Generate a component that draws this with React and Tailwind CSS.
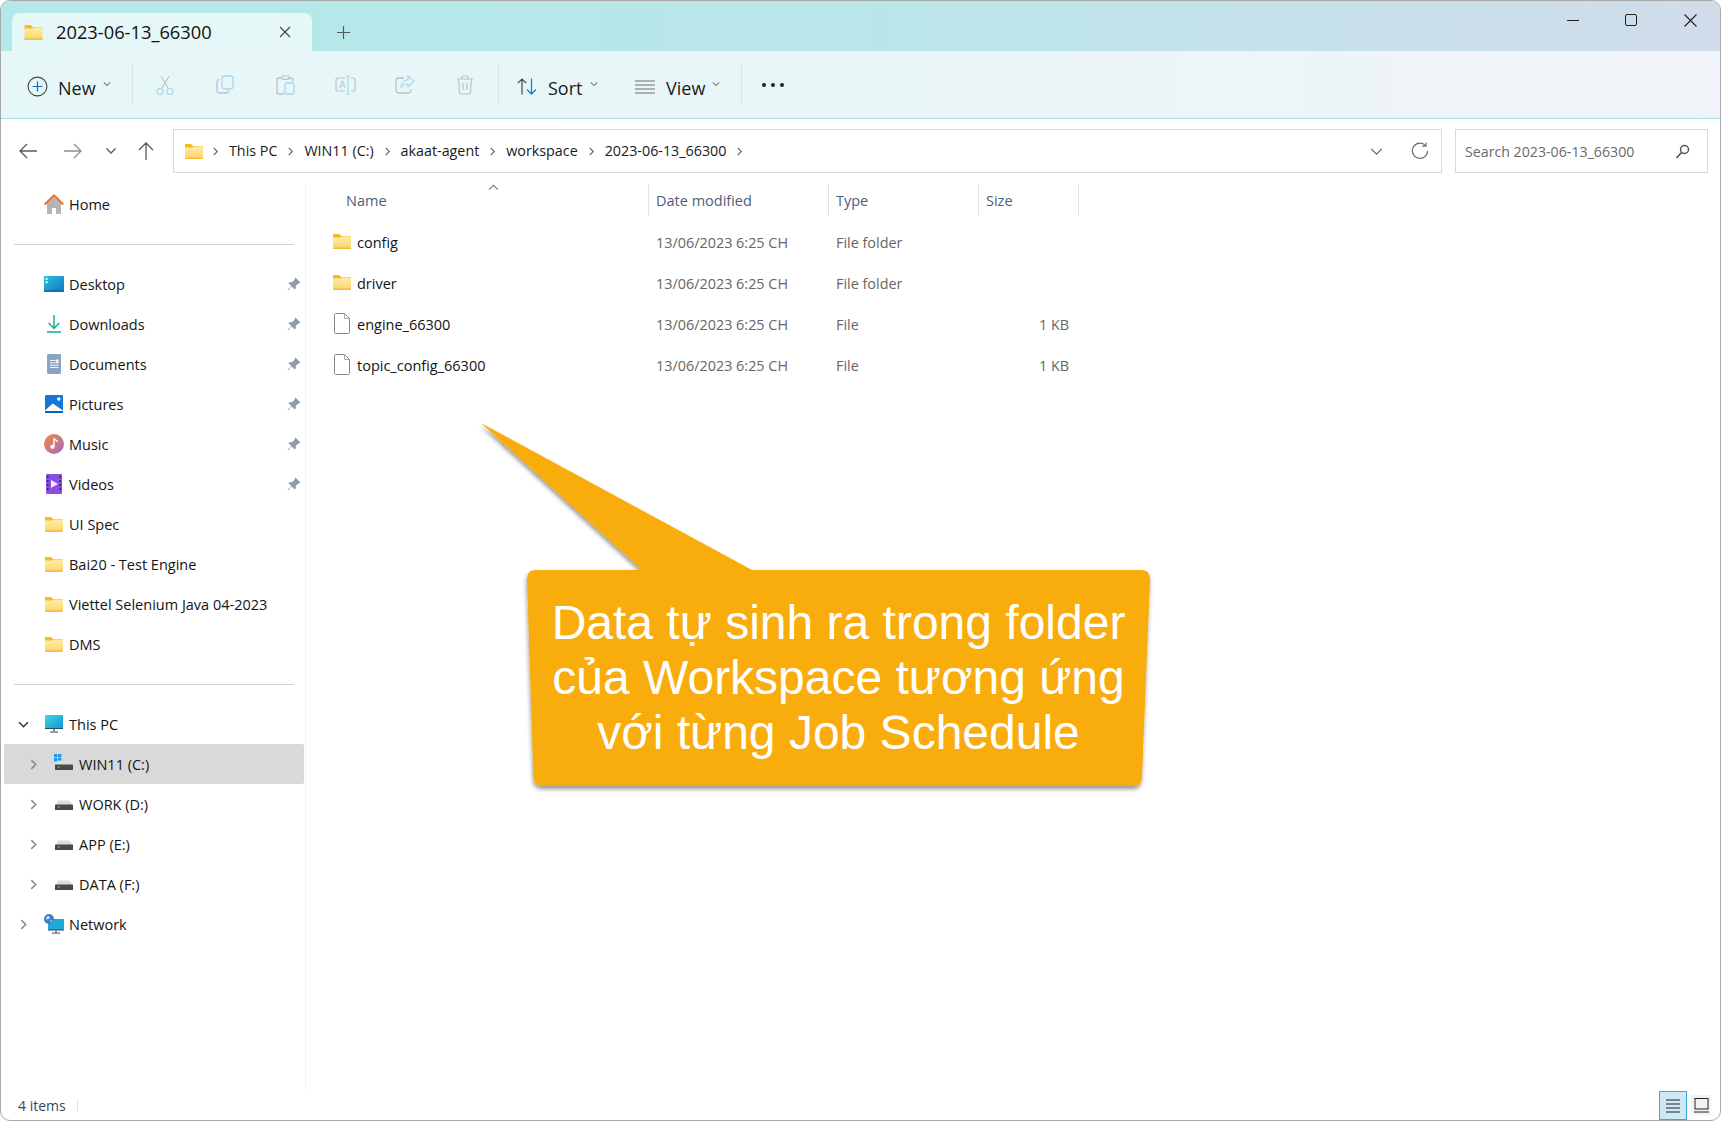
import React from "react";

const Folder = ({ w = 18, h = 15 }) => (
  <svg width={w} height={h} viewBox="0 0 18 15" className="shrink-0">
    <defs>
      <linearGradient id="fg" x1="0" y1="0" x2="0" y2="1">
        <stop offset="0" stopColor="#ffeeb0" />
        <stop offset="1" stopColor="#fdd35e" />
      </linearGradient>
    </defs>
    <path d="M0 1a1 1 0 0 1 1-1h5l2 2h9a1 1 0 0 1 1 1v2H0z" fill="#f9b81e" />
    <path d="M0 3.5h7.5L9 2.5h8a1 1 0 0 1 1 1V14a1 1 0 0 1-1 1H1a1 1 0 0 1-1-1z" fill="url(#fg)" />
    <path d="M0 14.2h18" stroke="#efb22c" strokeWidth="1" />
  </svg>
);

const FileIcon = () => (
  <svg width="18" height="21" viewBox="0 0 18 21" className="shrink-0">
    <path d="M2.5.5h9l5 5v14a1 1 0 0 1-1 1h-13a1 1 0 0 1-1-1v-18a1 1 0 0 1 1-1z" fill="#fff" stroke="#8a8a8a" />
    <path d="M11.5.5v5h5" fill="none" stroke="#a8a8a8" />
  </svg>
);

const Chev = ({ dir = "right", c = "#7a7a7a", s = 10, sw = 1.3 }) => {
  const d = {
    right: "M3 1l4 4-4 4",
    down: "M1 3l4 4 4-4",
    up: "M1 7l4-4 4 4",
  }[dir];
  return (
    <svg width={s} height={s} viewBox="0 0 10 10" className="shrink-0">
      <path d={d} fill="none" stroke={c} strokeWidth={sw} />
    </svg>
  );
};

const Pin = () => (
  <svg width="14" height="14" viewBox="0 0 14 14" className="shrink-0">
    <path d="M8.5.6l4.9 4.9-1 .9-.8-.2-2.8 2.8.1 2.2-1.2 1.2-2.9-2.9L1.2 13.4.6 12.8l3.9-3.6-2.9-2.9 1.2-1.2 2.2.1 2.8-2.8-.2-.8z" fill="#8f9ba6" />
  </svg>
);

const Drive = ({ win }) => (
  <div className="relative w-[20px] h-[20px] shrink-0">
    <svg width="20" height="20" viewBox="0 0 20 20">
      {win && (
        <g fill="#1e9bf0">
          <rect x="0" y="0" width="3.4" height="3.4" />
          <rect x="4" y="0" width="3.4" height="3.4" />
          <rect x="0" y="4" width="3.4" height="3.4" />
          <rect x="4" y="4" width="3.4" height="3.4" />
        </g>
      )}
      <path d="M2 10l2-3.4h11l3 3.4v1H2z" fill="#dcdcdc" />
      <rect x="1" y="10.5" width="18" height="5.5" rx=".6" fill="#4a4a4a" />
      <rect x="4" y="12.5" width="1.4" height="1.4" fill="#5fe04f" />
    </svg>
  </div>
);

const icons = {
  home: (
    <svg width="20" height="20" viewBox="0 0 20 20">
      <path d="M3 9.5L10 3l7 6.5V20H12v-6H8v6H3z" fill="#b4b4b4" />
      <path d="M0.7 10.5L10 1.5l9.3 9" fill="none" stroke="#e8742a" strokeWidth="2.2" />
    </svg>
  ),
  desktop: (
    <svg width="20" height="16" viewBox="0 0 20 16">
      <defs>
        <linearGradient id="dg" x1="0" y1="0" x2="1" y2="1">
          <stop offset="0" stopColor="#29c0dc" />
          <stop offset="1" stopColor="#1479c4" />
        </linearGradient>
      </defs>
      <rect width="20" height="15" rx=".8" fill="url(#dg)" />
      <rect y="14.6" width="20" height="1.2" fill="#0c3f68" />
      <rect x="1.6" y="1.8" width="2" height="2" fill="#dff6fb" />
      <rect x="1.6" y="5.2" width="2" height="2" fill="#dff6fb" />
    </svg>
  ),
  downloads: (
    <svg width="20" height="20" viewBox="0 0 20 20">
      <path d="M10 1v13M4.6 9l5.4 5.4L15.4 9" fill="none" stroke="#1fae8f" strokeWidth="1.5" />
      <path d="M3 18h14" stroke="#1fb394" strokeWidth="1.6" />
    </svg>
  ),
  documents: (
    <svg width="20" height="20" viewBox="0 0 20 20">
      <rect x="3" y="0" width="14" height="20" rx="1.2" fill="#8ba3c2" />
      <rect x="6" y="6" width="5" height="1" fill="#eef2f7" />
      <rect x="6" y="8.4" width="5" height="1" fill="#eef2f7" />
      <rect x="11.6" y="5.5" width="3" height="3.8" fill="#eef2f7" />
      <rect x="6" y="10.8" width="8.5" height="1" fill="#eef2f7" />
      <rect x="6" y="13" width="8.5" height="1" fill="#eef2f7" />
    </svg>
  ),
  pictures: (
    <svg width="20" height="18" viewBox="0 0 20 18">
      <rect x="1" y="0" width="18" height="18" rx="1" fill="#1677d8" />
      <circle cx="14.8" cy="4" r="1.7" fill="#fff" />
      <path d="M1 15.6L8.8 8.6 19 15.6V16H1z" fill="#fff" />
      <rect x="1" y="16" width="18" height="2" fill="#0f5fb8" />
    </svg>
  ),
  music: (
    <svg width="20" height="20" viewBox="0 0 20 20">
      <defs>
        <linearGradient id="mg" x1="0" y1="0" x2="1" y2="1">
          <stop offset="0" stopColor="#f08a3c" />
          <stop offset="1" stopColor="#a869c8" />
        </linearGradient>
      </defs>
      <circle cx="10" cy="10" r="10" fill="url(#mg)" />
      <path d="M10 4.5v8" stroke="#fff" strokeWidth="1.4" />
      <path d="M10 4.5c1 1.8 3 1.6 3.6 3.4" fill="none" stroke="#fff" strokeWidth="1.4" />
      <circle cx="8.4" cy="12.8" r="2.1" fill="#fff" />
    </svg>
  ),
  videos: (
    <svg width="20" height="20" viewBox="0 0 20 20">
      <rect x="2" y="0" width="16" height="20" rx="1" fill="#8a4fe0" />
      <g fill="#3c1d78">
        <rect x="3" y="2" width="1.5" height="2" />
        <rect x="3" y="6" width="1.5" height="2" />
        <rect x="3" y="10" width="1.5" height="2" />
        <rect x="3" y="14" width="1.5" height="2" />
        <rect x="15.5" y="2" width="1.5" height="2" />
        <rect x="15.5" y="6" width="1.5" height="2" />
        <rect x="15.5" y="10" width="1.5" height="2" />
        <rect x="15.5" y="14" width="1.5" height="2" />
      </g>
      <path d="M7 6l7 4-7 4z" fill="#f3edff" />
    </svg>
  ),
  pc: (
    <svg width="20" height="18" viewBox="0 0 20 18">
      <defs>
        <linearGradient id="pg" x1="0" y1="0" x2="1" y2="1">
          <stop offset="0" stopColor="#3bdbe0" />
          <stop offset="1" stopColor="#1692d8" />
        </linearGradient>
      </defs>
      <rect x="1" y="0" width="18" height="13.5" fill="url(#pg)" />
      <path d="M1 13.5h18" stroke="#25506e" strokeWidth="1" />
      <rect x="9" y="14" width="2" height="2.4" fill="#7a8691" />
      <rect x="6" y="16.4" width="8" height="1.3" fill="#5f6b76" />
    </svg>
  ),
  network: (
    <svg width="20" height="20" viewBox="0 0 20 20">
      <rect x="4" y="5" width="16" height="11" fill="#22a7dc" />
      <path d="M4 16h16" stroke="#25506e" strokeWidth="1" />
      <rect x="11" y="16.5" width="2" height="2" fill="#7a8691" />
      <rect x="8" y="18.5" width="8" height="1.2" fill="#5f6b76" />
      <circle cx="5" cy="5" r="5" fill="#3f7fc4" />
      <path d="M2 3.5c2-2 3.5-1.5 4 .2-.5 1.6-2.4 1-3.5 2.3zM6.5 6.5l2 0-1.5 2.2z" fill="#bfe0f4" />
    </svg>
  ),
};

const Row = ({ icon, label, pinned, chevron, depth = 0, active, down }) => (
  <div className={`mx-[3px] w-[300px] h-10 flex items-center rounded-[2px] shrink-0 ${active ? "bg-[#d9d9d9]" : ""}`}>
    <div className={`${depth ? "w-[50px] pl-[24px]" : "w-[40px] pl-[14px]"} shrink-0 flex items-center`}>
      {chevron && <Chev dir={down ? "down" : "right"} c={down ? "#333333" : "#8a8a8a"} sw={1.4} s={11} />}
    </div>
    <div className="w-[20px] shrink-0 flex items-center justify-center">{icon}</div>
    <span className="ml-[5px] pt-[2px] text-[14.5px] text-[#141414] whitespace-nowrap">{label}</span>
    {pinned && (
      <span className="ml-auto mr-[3px]">
        <Pin />
      </span>
    )}
  </div>
);

const SideDivider = () => (
  <div className="h-10 flex items-center shrink-0 pl-[13px]">
    <div className="w-[280px] h-px bg-[#d4d4d4]" />
  </div>
);

const TSep = () => <div className="w-px h-[40px] bg-[#d5e3e4] shrink-0" />;

const Cell = ({ children }) => <div className="w-[60px] h-[22px] flex items-center justify-center shrink-0">{children}</div>;

const G = "#bcc3c6";
const B = "#a9d5f2";

const crumbs = ["This PC", "WIN11 (C:)", "akaat-agent", "workspace", "2023-06-13_66300"];
const files = [
  { n: "config", t: "File folder", folder: true },
  { n: "driver", t: "File folder", folder: true },
  { n: "engine_66300", t: "File", s: "1 KB" },
  { n: "topic_config_66300", t: "File", s: "1 KB" },
];

export default function App() {
  return (
    <div className="relative w-[1721px] h-[1121px] bg-white overflow-hidden font-['Open_Sans','Noto_Sans',sans-serif]">
      <div className="w-[1721px] h-[1121px] border border-[#a8a8a8] rounded-[10px] overflow-hidden flex flex-col bg-white">
        {/* title bar */}
        <div className="h-[50px] shrink-0 flex items-end pl-[11px] bg-linear-to-r from-[#b4e9e9] via-[#b9e6ea] to-[#d1dcea]">
          <div className="w-[300px] h-[38px] rounded-t-[8px] bg-[#e6f7f7] flex items-center pl-[12px] pr-[21px]">
            <Folder w={19} h={15} />
            <span className="ml-[13px] text-[18.3px] text-[#111] whitespace-nowrap">2023-06-13_66300</span>
            <svg width="12" height="12" viewBox="0 0 12 12" className="ml-auto">
              <path d="M1 1l10 10M11 1L1 11" stroke="#444" strokeWidth="1.1" />
            </svg>
          </div>
          <div className="h-[38px] flex items-center ml-[25px]">
            <svg width="13" height="13" viewBox="0 0 13 13">
              <path d="M6.5 0v13M0 6.5h13" stroke="#555" strokeWidth="1.2" />
            </svg>
          </div>
          <div className="ml-auto self-start flex h-[38px] items-center">
            <div className="w-[58px] flex justify-center">
              <div className="w-[12px] h-px bg-[#222]" />
            </div>
            <div className="w-[58px] flex justify-center">
              <div className="w-[12px] h-[12px] border border-[#222] rounded-[2px]" />
            </div>
            <div className="w-[60px] flex justify-center">
              <svg width="13" height="13" viewBox="0 0 13 13">
                <path d="M.5.5l12 12M12.5.5l-12 12" stroke="#222" strokeWidth="1.1" />
              </svg>
            </div>
          </div>
        </div>

        {/* toolbar */}
        <div className="h-[68px] shrink-0 flex items-center border-b border-[#aadadf] bg-linear-to-r from-[#e6f7f7] via-[#e9f6f8] to-[#f1f4f8]">
          <div className="w-[131px] shrink-0 flex items-center pl-[26px]">
            <svg width="21" height="21" viewBox="0 0 21 21" className="mt-[4px]">
              <circle cx="10.5" cy="10.5" r="9.4" fill="none" stroke="#444" strokeWidth="1.1" />
              <path d="M10.5 5.5v10M5.5 10.5h10" stroke="#0f6cbd" strokeWidth="1.2" />
            </svg>
            <span className="ml-[10px] mt-[8px] text-[18px] text-[#1a1a1a]">New</span>
            <span className="ml-[7px] -mt-[1px]">
              <Chev dir="down" c="#777" s={8} />
            </span>
          </div>
          <TSep />
          <div className="flex ml-[2px] mr-[3px]">
            <Cell>
              <svg width="18" height="20" viewBox="0 0 18 20">
                <path d="M5.8 13.6L13 1M12.2 13.6L5 1" fill="none" stroke={G} strokeWidth="1.1" />
                <circle cx="4" cy="16.5" r="3" fill="none" stroke={B} strokeWidth="1.2" />
                <circle cx="14" cy="16.5" r="3" fill="none" stroke={B} strokeWidth="1.2" />
              </svg>
            </Cell>
            <Cell>
              <svg width="18" height="19" viewBox="0 0 18 19">
                <path d="M3.5 4.5A2.5 2.5 0 0 0 1 7v8.5A2.5 2.5 0 0 0 3.5 18H10a2.5 2.5 0 0 0 2.5-2.5" fill="none" stroke={G} strokeWidth="1.3" />
                <rect x="6" y="1" width="11" height="13" rx="2.4" fill="none" stroke={B} strokeWidth="1.3" />
              </svg>
            </Cell>
            <Cell>
              <svg width="19" height="20" viewBox="0 0 19 20">
                <path d="M6 3H3a2 2 0 0 0-2 2v12a2 2 0 0 0 2 2h5M13 3h2a2 2 0 0 1 2 2v2" fill="none" stroke={G} strokeWidth="1.3" />
                <rect x="6" y="1" width="7" height="3.4" rx="1.2" fill="none" stroke={G} strokeWidth="1.2" />
                <rect x="9" y="8" width="9" height="11" rx="2" fill="none" stroke={B} strokeWidth="1.3" />
              </svg>
            </Cell>
            <Cell>
              <svg width="21" height="20" viewBox="0 0 21 20">
                <path d="M10 3H3a2 2 0 0 0-2 2v9a2 2 0 0 0 2 2h7M16 3h2a2 2 0 0 1 2 2v9a2 2 0 0 1-2 2h-2" fill="none" stroke={G} strokeWidth="1.2" />
                <path d="M13 1v18M11 1h4M11 19h4" stroke={B} strokeWidth="1.2" />
                <path d="M4.5 13L7.5 6l3 7M5.6 11h3.8" fill="none" stroke={B} strokeWidth="1.1" />
              </svg>
            </Cell>
            <Cell>
              <svg width="20" height="19" viewBox="0 0 20 19">
                <path d="M9 3H4a3 3 0 0 0-3 3v9a3 3 0 0 0 3 3h9a3 3 0 0 0 3-3v-1" fill="none" stroke={G} strokeWidth="1.3" />
                <path d="M13 1l6 5.5-6 5.5V9c-3.5 0-5.5 1-7 4 0-5 3-8 7-8.2z" fill="none" stroke={B} strokeWidth="1.2" />
              </svg>
            </Cell>
            <Cell>
              <svg width="18" height="20" viewBox="0 0 18 20">
                <path d="M1 4h16M6 4V2.5A1.5 1.5 0 0 1 7.5 1h3A1.5 1.5 0 0 1 12 2.5V4M2.5 4l1 13.5A2 2 0 0 0 5.5 19h7a2 2 0 0 0 2-1.5l1-13.5M7 8v7M11 8v7" fill="none" stroke={G} strokeWidth="1.2" />
              </svg>
            </Cell>
          </div>
          <TSep />
          <div className="w-[121px] shrink-0 flex items-center pl-[18px]">
            <svg width="21" height="17" viewBox="0 0 21 17" className="mt-[4px]">
              <path d="M5 16.5V1M.8 5.2L5 1l4.2 4.2" fill="none" stroke="#444" strokeWidth="1.2" />
              <path d="M14.5 .5V16M10 11.5l4.5 4.5 4.5-4.5" fill="none" stroke="#0f7fd8" strokeWidth="1.3" />
            </svg>
            <span className="ml-[10px] mt-[8px] text-[18px] text-[#1a1a1a]">Sort</span>
            <span className="ml-[8px] -mt-[1px]">
              <Chev dir="down" c="#777" s={8} />
            </span>
          </div>
          <div className="w-[121px] shrink-0 flex items-center pl-[15px]">
            <svg width="20" height="14" viewBox="0 0 20 14" className="mt-[5px]">
              <path d="M0 1h20M0 5h20M0 9h20M0 13h20" stroke="#6b6b6b" strokeWidth="1.2" />
            </svg>
            <span className="ml-[11px] mt-[8px] text-[18px] text-[#1a1a1a]">View</span>
            <span className="ml-[7px] -mt-[1px]">
              <Chev dir="down" c="#777" s={8} />
            </span>
          </div>
          <TSep />
          <div className="ml-[20px] flex gap-[5px]">
            <div className="w-[4px] h-[4px] rounded-full bg-[#222]" />
            <div className="w-[4px] h-[4px] rounded-full bg-[#222]" />
            <div className="w-[4px] h-[4px] rounded-full bg-[#222]" />
          </div>
        </div>

        {/* address row */}
        <div className="h-[62px] shrink-0 flex items-start pt-[10px] pl-[17px] pr-[12px]">
          <div className="h-[44px] flex items-center shrink-0">
            <svg width="20" height="20" viewBox="0 0 20 20">
              <path d="M19 10H2M9 3l-7 7 7 7" fill="none" stroke="#5a5a5a" strokeWidth="1.3" />
            </svg>
            <svg width="20" height="20" viewBox="0 0 20 20" className="ml-[25px]">
              <path d="M1 10h17M11 3l7 7-7 7" fill="none" stroke="#8e8e8e" strokeWidth="1.3" />
            </svg>
            <svg width="20" height="20" viewBox="0 0 20 20" className="ml-[18px]">
              <path d="M5.5 7.5l4.5 4.5 4.5-4.5" fill="none" stroke="#5a5a5a" strokeWidth="1.4" />
            </svg>
            <svg width="20" height="20" viewBox="0 0 20 20" className="ml-[15px]">
              <path d="M10 19V2M3 9l7-7 7 7" fill="none" stroke="#5a5a5a" strokeWidth="1.3" />
            </svg>
          </div>
          <div className="ml-[17px] flex-1 h-[44px] border border-[#d9d9d9] flex items-center pl-[11px] pr-[12px]">
            <Folder w={18} h={15} />
            <div className="flex items-center ml-[8px]">
              {crumbs.map((c) => (
                <div key={c} className="flex items-center">
                  <Chev dir="right" c="#666" s={9} />
                  <span className="mx-[9px] text-[14.3px] text-[#1a1a1a] whitespace-nowrap">{c}</span>
                </div>
              ))}
              <Chev dir="right" c="#666" s={9} />
            </div>
            <div className="ml-auto flex items-center">
              <Chev dir="down" c="#666" s={13} sw={1} />
              <svg width="18" height="18" viewBox="0 0 18 18" className="ml-[28px]">
                <path d="M14.6 3.6A7.6 7.6 0 1 0 16.6 9" fill="none" stroke="#6a6a6a" strokeWidth="1.2" />
                <path d="M15 .6v3.6h-3.8" fill="none" stroke="#6a6a6a" strokeWidth="1.2" />
              </svg>
            </div>
          </div>
          <div className="ml-[13px] w-[253px] h-[44px] border border-[#d9d9d9] flex items-center pl-[9px] pr-[17px] shrink-0">
            <span className="text-[14.2px] pt-[1px] text-[#6a6a6a] whitespace-nowrap">Search 2023-06-13_66300</span>
            <svg width="15" height="15" viewBox="0 0 15 15" className="ml-auto">
              <circle cx="9.5" cy="5.5" r="4" fill="none" stroke="#555" strokeWidth="1.5" />
              <path d="M6.5 8.5l-5 5.5" stroke="#555" strokeWidth="1.7" />
            </svg>
          </div>
        </div>

        {/* body */}
        <div className="flex-1 min-h-0 flex pt-[3px]">
          <div className="w-[305px] shrink-0 border-r border-[#f0f0f0] flex flex-col">
            <Row icon={icons.home} label="Home" />
            <SideDivider />
            <Row icon={icons.desktop} label="Desktop" pinned />
            <Row icon={icons.downloads} label="Downloads" pinned />
            <Row icon={icons.documents} label="Documents" pinned />
            <Row icon={icons.pictures} label="Pictures" pinned />
            <Row icon={icons.music} label="Music" pinned />
            <Row icon={icons.videos} label="Videos" pinned />
            <Row icon={<Folder />} label="UI Spec" />
            <Row icon={<Folder />} label="Bai20 - Test Engine" />
            <Row icon={<Folder />} label="Viettel Selenium Java 04-2023" />
            <Row icon={<Folder />} label="DMS" />
            <SideDivider />
            <Row icon={icons.pc} label="This PC" chevron down />
            <Row icon={<Drive win />} label="WIN11 (C:)" chevron depth={1} active />
            <Row icon={<Drive />} label="WORK (D:)" chevron depth={1} />
            <Row icon={<Drive />} label="APP (E:)" chevron depth={1} />
            <Row icon={<Drive />} label="DATA (F:)" chevron depth={1} />
            <Row icon={icons.network} label="Network" chevron />
          </div>
          <div className="flex-1 min-w-0">
            <div className="grid grid-cols-[343px_180px_150px_100px] h-[32px] w-[773px] text-[14.5px] text-[#4c607a]">
              <div className="relative border-r border-[#e5e5e5] pl-[40px] pt-[2px] flex items-center">
                Name
                <span className="absolute left-[182px] top-[-2px]">
                  <Chev dir="up" c="#777" s={11} sw={1} />
                </span>
              </div>
              <div className="border-r border-[#e5e5e5] pl-[7px] pt-[2px] flex items-center">Date modified</div>
              <div className="border-r border-[#e5e5e5] pl-[7px] pt-[2px] flex items-center">Type</div>
              <div className="border-r border-[#e5e5e5] pl-[7px] pt-[2px] flex items-center">Size</div>
            </div>
            <div className="mt-[6px] w-[773px]">
              {files.map((f) => (
                <div key={f.n} className="grid grid-cols-[343px_180px_150px_100px] h-[41px] items-center text-[14.4px] text-[#666666]">
                  <div className="flex items-center pl-[27px]">
                    <div className="w-[18px] flex justify-center -mt-[2px]">{f.folder ? <Folder /> : <FileIcon />}</div>
                    <span className="ml-[6px] text-[14.5px] text-[#141414] whitespace-nowrap">{f.n}</span>
                  </div>
                  <div className="pl-[7px] whitespace-nowrap">13/06/2023 6:25 CH</div>
                  <div className="pl-[7px]">{f.t}</div>
                  <div className="text-right pr-[10px]">{f.s}</div>
                </div>
              ))}
            </div>
          </div>
        </div>

        {/* status bar */}
        <div className="h-[30px] shrink-0 flex items-center pl-[17px]">
          <span className="text-[14px] text-[#34465a]">4 items</span>
          <div className="ml-[11px] w-px h-[13px] bg-[#e6e6e6]" />
          <div className="ml-auto flex items-end self-end mr-[9px]">
            <div className="w-[28px] h-[29px] border border-[#3ca6dd] bg-[#cfe8f6] flex items-center justify-center">
              <svg width="16" height="14" viewBox="0 0 16 14">
                <path d="M1 1h14M1 5h14M1 9h14M1 13h14" stroke="#222" strokeWidth="1" />
              </svg>
            </div>
            <div className="ml-[4px] mb-[5px] w-[20px] h-[20px] bg-[#f3f3f3] flex items-center justify-center">
              <svg width="15" height="15" viewBox="0 0 15 15">
                <rect x="1" y=".5" width="13" height="10.5" fill="none" stroke="#222" />
                <path d="M0 14h15" stroke="#222" />
              </svg>
            </div>
          </div>
        </div>
      </div>

      {/* callout */}
      <svg className="absolute left-0 top-0 pointer-events-none" width="1721" height="1121" viewBox="0 0 1721 1121">
        <defs>
          <filter id="cs" x="-5%" y="-5%" width="110%" height="112%">
            <feDropShadow dx="-0.5" dy="3" stdDeviation="2.2" floodColor="#000" floodOpacity="0.42" />
          </filter>
        </defs>
        <path
          d="M481 423L752 570H1141Q1150 570 1150 579L1142 777Q1142 786 1133 786H543Q534 786 533.5 777L527 579Q527 570 536 570H642Z"
          fill="#f9ad0a"
          filter="url(#cs)"
        />
      </svg>
      <div className="absolute left-[527px] top-[595px] w-[623px] text-center text-white text-[48px] leading-[55px] font-['Liberation_Sans',Arial,sans-serif]">
        <div className="whitespace-nowrap">Data tự sinh ra trong folder</div>
        <div className="whitespace-nowrap">của Workspace tương ứng</div>
        <div className="whitespace-nowrap">với từng Job Schedule</div>
      </div>
    </div>
  );
}
